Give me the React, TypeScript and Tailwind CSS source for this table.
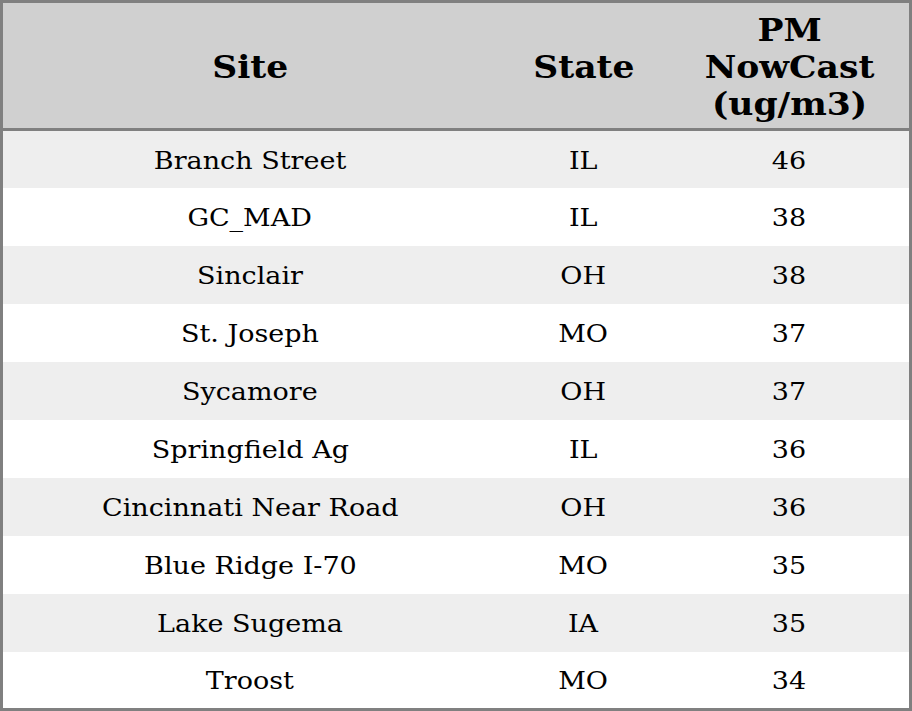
import React from "react";

const rows: [string, string, number][] = [
  ["Branch Street", "IL", 46],
  ["GC_MAD", "IL", 38],
  ["Sinclair", "OH", 38],
  ["St. Joseph", "MO", 37],
  ["Sycamore", "OH", 37],
  ["Springfield Ag", "IL", 36],
  ["Cincinnati Near Road", "OH", 36],
  ["Blue Ridge I-70", "MO", 35],
  ["Lake Sugema", "IA", 35],
  ["Troost", "MO", 34],
];

// text in the shot is a bit wider than the font renders, so stretch it a touch
const Wide = ({ children }: { children: React.ReactNode }) => (
  <span className="inline-block scale-x-[1.08] whitespace-nowrap">{children}</span>
);

export default function App() {
  return (
    <div className="w-[912px] h-[711px] bg-white font-['DejaVu_Serif',serif] text-black">
      <table className="w-full h-full border-[3px] border-[#808080] border-collapse table-fixed">
        <colgroup>
          <col className="w-[494px]" />
          <col className="w-[172px]" />
          <col className="w-[240px]" />
        </colgroup>
        <thead>
          <tr className="h-[128px] bg-[#d0d0d0] border-b-[3px] border-[#808080] text-[32px] font-bold leading-[37px]">
            <th className="text-center pt-[3px]">
              <Wide>Site</Wide>
            </th>
            <th className="text-center pt-[3px]">
              <Wide>State</Wide>
            </th>
            <th className="text-center pt-[3px]">
              <Wide>
                PM
                <br />
                NowCast
                <br />
                (ug/m3)
              </Wide>
            </th>
          </tr>
        </thead>
        <tbody className="text-[25px]">
          {rows.map(([site, state, pm], i) => (
            <tr key={site} className={i % 2 === 0 ? "bg-[#eeeeee] h-[58px]" : "bg-white h-[58px]"}>
              <td className="text-center pt-[2px]">
                <Wide>{site}</Wide>
              </td>
              <td className="text-center pt-[2px]">
                <Wide>{state}</Wide>
              </td>
              <td className="text-center pt-[2px]">
                <Wide>{pm}</Wide>
              </td>
            </tr>
          ))}
        </tbody>
      </table>
    </div>
  );
}
